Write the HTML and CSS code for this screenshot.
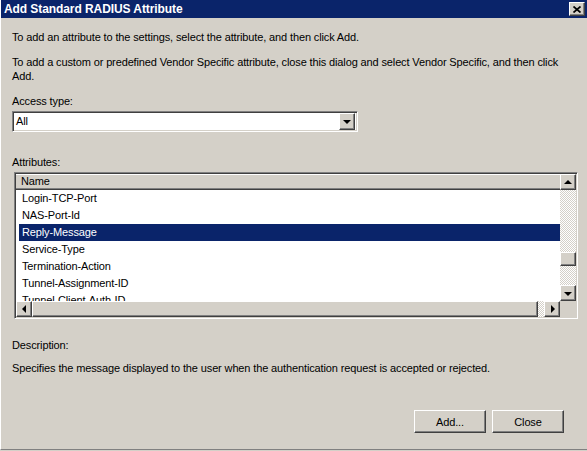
FILE: index.html
```html
<!DOCTYPE html>
<html lang="en">
<head>
  <meta charset="UTF-8">
  <title>Add Standard RADIUS Attribute</title>
  <link rel="stylesheet" href="styles.css">
</head>
<body>
  <div class="dialog">
    <div class="title-bar">
      <span class="title">Add Standard RADIUS Attribute</span>
      <button class="close-x" title="Close">
        <svg width="8" height="7" viewBox="0 0 8 7">
          <path d="M0.5 0.5 L7.5 6.5 M7.5 0.5 L0.5 6.5" stroke="#000" stroke-width="1.7" fill="none"/>
        </svg>
      </button>
    </div>

    <div class="content">
      <p class="intro">To add an attribute to the settings, select the attribute, and then click Add.</p>
      <p class="intro second">To add a custom or predefined Vendor Specific attribute, close this dialog and select Vendor Specific, and then click Add.</p>

      <div class="label access-label">Access type:</div>
      <div class="combo">
        <span class="combo-value">All</span>
        <span class="btn3d combo-btn"><i class="arrow down"></i></span>
      </div>

      <div class="label attr-label">Attributes:</div>
      <div class="listbox">
        <div class="list-main">
          <div class="list-header">Name</div>
          <div class="row">Login-TCP-Port</div>
          <div class="row">NAS-Port-Id</div>
          <div class="row selected">Reply-Message</div>
          <div class="row">Service-Type</div>
          <div class="row">Termination-Action</div>
          <div class="row">Tunnel-Assignment-ID</div>
          <div class="row">Tunnel-Client-Auth-ID</div>
        </div>
        <div class="vscroll">
          <span class="btn3d sb-btn"><i class="arrow up"></i></span>
          <div class="track vtrack">
            <span class="btn3d vthumb"></span>
          </div>
          <span class="btn3d sb-btn"><i class="arrow down"></i></span>
        </div>
        <div class="hscroll">
          <span class="btn3d sb-btn"><i class="arrow left"></i></span>
          <span class="btn3d hthumb"></span>
          <div class="track htrack"></div>
          <span class="btn3d sb-btn"><i class="arrow right"></i></span>
        </div>
        <div class="corner"></div>
      </div>

      <div class="label desc-label">Description:</div>
      <p class="desc">Specifies the message displayed to the user when the authentication request is accepted or rejected.</p>

      <div class="actions">
        <button class="btn3d push">Add...</button>
        <button class="btn3d push">Close</button>
      </div>
    </div>
  </div>
</body>
</html>
```

FILE: styles.css
```css
body {
  margin: 0;
  background: #d4d0c8;
  font-family: 'Liberation Sans', Arial, sans-serif;
  font-size: 11px;
  letter-spacing: -0.13px;
  color: #000;
}

.dialog {
  width: 587px;
  height: 450px;
  box-sizing: border-box;
  border-left: 1px solid #ffffff;
  border-bottom: 1px solid #808080;
  overflow: hidden;
}

.title-bar {
  height: 18px;
  background: #0a246a;
  display: flex;
  align-items: center;
  padding: 0 2px 0 3px;
}

.title {
  color: #fff;
  font-weight: bold;
  font-size: 12px;
  letter-spacing: -0.08px;
}

.close-x {
  margin-left: auto;
  width: 16px;
  height: 14px;
  padding: 0;
  background: #d4d0c8;
  border: 1px solid;
  border-color: #fff #404040 #404040 #fff;
  box-shadow: inset -1px -1px #808080;
  display: flex;
  align-items: center;
  justify-content: center;
}

.content {
  padding: 0 11px;
}

.intro,
.desc {
  margin: 0;
  line-height: 14px;
}

.intro {
  margin-top: 12px;
}

.intro.second {
  margin-top: 11px;
}

.label {
  line-height: 14px;
}

.access-label {
  margin-top: 11px;
}

/* 3d bevels */
.btn3d {
  box-sizing: border-box;
  background: #d4d0c8;
  border: 1px solid;
  border-color: #fff #404040 #404040 #fff;
  box-shadow: inset -1px -1px #808080;
}

.combo {
  margin-top: 3px;
  width: 346px;
  height: 21px;
  box-sizing: border-box;
  background: #fff;
  border: 1px solid;
  border-color: #808080 #fff #fff #808080;
  box-shadow: inset 1px 1px #404040, inset -1px -1px #d4d0c8;
  display: flex;
  align-items: center;
  padding: 1px 2px 2px 3px;
}

.combo-value {
  flex: 1;
}

.combo-btn {
  width: 16px;
  height: 17px;
  display: flex;
  align-items: center;
  justify-content: center;
}

.arrow {
  width: 0;
  height: 0;
  border-style: solid;
  display: block;
}

.arrow.down {
  border-width: 4px 4px 0 4px;
  border-color: #000 transparent transparent transparent;
  margin-top: 1px;
}

.arrow.up {
  border-width: 0 4px 4px 4px;
  border-color: transparent transparent #000 transparent;
  margin-top: -1px;
}

.arrow.left {
  border-width: 4px 4px 4px 0;
  border-color: transparent #000 transparent transparent;
}

.arrow.right {
  border-width: 4px 0 4px 4px;
  border-color: transparent transparent transparent #000;
  margin-left: 1px;
}

.attr-label {
  margin-top: 23px;
}

.listbox {
  margin: 3px 0 0 2px;
  width: 564px;
  height: 147px;
  box-sizing: border-box;
  border: 1px solid;
  border-color: #808080 #fff #fff #808080;
  box-shadow: inset 1px 1px #404040, inset -1px -1px #d4d0c8;
  padding: 1px;
  display: grid;
  grid-template-columns: 544px 16px;
  grid-template-rows: 127px 16px;
  background: #fff;
}

.list-main {
  overflow: hidden;
  background: #fff;
}

.list-header {
  height: 16px;
  box-sizing: border-box;
  background: #d4d0c8;
  border-top: 1px solid #fff;
  border-bottom: 1px solid #404040;
  box-shadow: inset 0 -1px #808080;
  padding-left: 5px;
  line-height: 13px;
}

.row {
  height: 17px;
  line-height: 17px;
  margin-left: 3px;
  padding-left: 3px;
  white-space: nowrap;
}

.row.selected {
  background: #0a246a;
  color: #fff;
}

.vscroll {
  display: flex;
  flex-direction: column;
}

.sb-btn {
  width: 16px;
  height: 16px;
  flex: none;
  display: flex;
  align-items: center;
  justify-content: center;
}

.track {
  background: repeating-conic-gradient(#ffffff 0 25%, #d4d0c8 0 50%) 0 0 / 2px 2px;
}

.vtrack {
  flex: 1;
}

.vthumb {
  display: block;
  width: 16px;
  height: 14px;
  margin-top: 62px;
}

.hscroll {
  display: flex;
}

.hthumb {
  width: 506px;
  height: 16px;
}

.htrack {
  flex: 1;
}

.corner {
  background: #d4d0c8;
}

.desc-label {
  margin-top: 19px;
}

.desc {
  margin-top: 9px;
}

.actions {
  margin-top: 35px;
  display: flex;
  justify-content: flex-end;
  gap: 6px;
  padding-right: 12px;
}

.push {
  width: 72px;
  height: 23px;
  font-family: inherit;
  font-size: 11px;
  letter-spacing: inherit;
  color: #000;
  padding: 0;
}
```
